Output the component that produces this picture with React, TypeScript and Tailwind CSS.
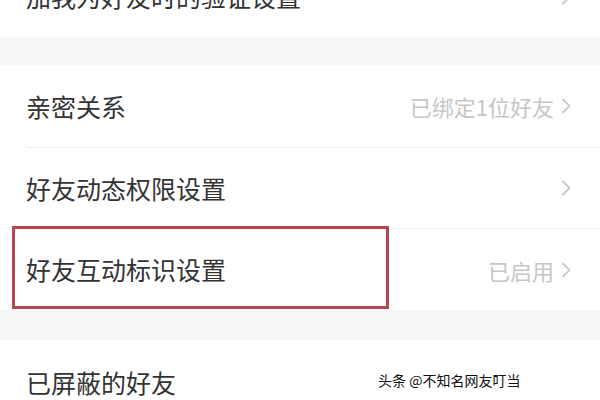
const font = { fontFamily: '"Noto Sans CJK SC", "Noto Sans", sans-serif' };

function Chevron() {
  return (
    <svg width="12" height="18" viewBox="0 0 12 18" className="ml-[6px] shrink-0">
      <path d="M3 2.5 L9.5 9 L3 15.5" fill="none" stroke="#c9c9c9" strokeWidth="1.8" strokeLinecap="round" strokeLinejoin="round" />
    </svg>
  );
}

function Row({ title, value, arrow = true, className = '' }: { title: string; value?: string; arrow?: boolean; className?: string }) {
  return (
    <div className={`flex items-center justify-between pl-[26px] pr-[28px] bg-white ${className}`}>
      <span className="text-[25px] text-[#333333] leading-none">{title}</span>
      <span className="flex items-center text-[22px] text-[#c6c6c6] leading-none">
        {value}
        {arrow && <Chevron />}
      </span>
    </div>
  );
}

export default function App() {
  return (
    <div className="relative w-[600px] h-[400px] overflow-hidden bg-white" style={font}>
      <Row title="加我为好友时的验证设置" className="h-[81px] -mt-[44px]" />
      <div className="h-[28px] bg-[#f5f6f8]" />
      <Row title="亲密关系" value="已绑定1位好友" className="h-[82px]" />
      <div className="ml-[26px] h-px bg-[#eeeeee]" />
      <Row title="好友动态权限设置" className="h-[80px]" />
      <div className="ml-[26px] h-px bg-[#eeeeee]" />
      <div className="relative">
        <Row title="好友互动标识设置" value="已启用" className="h-[81px]" />
        <div className="absolute left-[12px] -top-[3px] w-[377px] h-[83px] border-[3px] border-[#b9464f]" />
      </div>
      <div className="h-[30px] bg-[#f5f6f8]" />
      <Row title="已屏蔽的好友" arrow={false} className="h-[84px]" />
      <span
        className="absolute left-[378px] top-[373px] text-[14px] leading-none text-[#111111]"
        style={{ textShadow: '0 0 2px #ffffff, 0 0 2px #ffffff' }}
      >
        头条 @不知名网友叮当
      </span>
    </div>
  );
}
